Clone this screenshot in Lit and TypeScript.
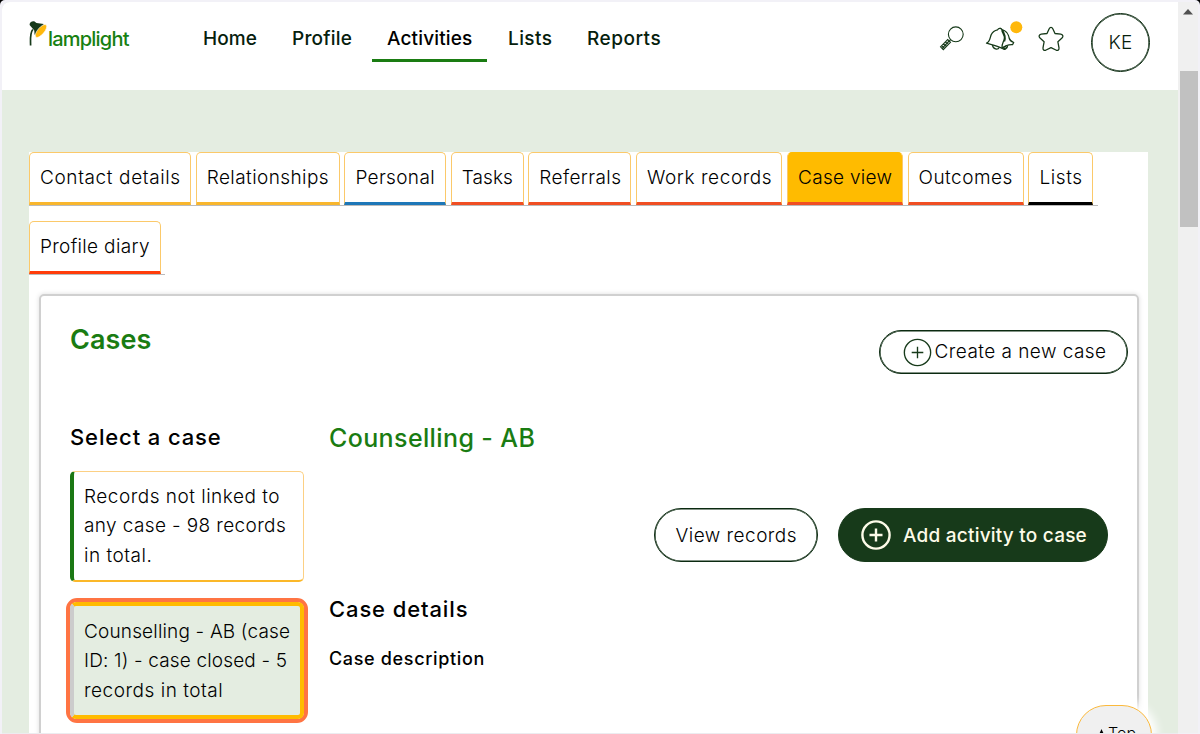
import { LitElement, html, css, svg } from "lit";
import { customElement } from "lit/decorators.js";
import { classMap } from "lit/directives/class-map.js";

interface Tab {
  label: string;
  width: number;
  tone: string;
  spacing: number;
  active?: boolean;
}

const NAV = [
  { label: "Home", width: 89, spacing: 0.1 },
  { label: "Profile", width: 95, spacing: 0.2 },
  { label: "Activities", width: 115, spacing: 0.15, active: true },
  { label: "Lists", width: 79, spacing: 0.4 },
  { label: "Reports", width: 102, spacing: 0.5 },
];

const TABS: Tab[] = [
  { label: "Contact details", width: 162, tone: "amber", spacing: 0.62 },
  { label: "Relationships", width: 144, tone: "amber", spacing: 0.42 },
  { label: "Personal", width: 101.6, tone: "blue", spacing: 0.35 },
  { label: "Tasks", width: 73, tone: "red", spacing: 0.1 },
  { label: "Referrals", width: 103, tone: "red", spacing: 0.4 },
  { label: "Work records", width: 146.3, tone: "red", spacing: 0.58 },
  { label: "Case view", width: 115.8, tone: "red", spacing: 0.3, active: true },
  { label: "Outcomes", width: 116.2, tone: "red", spacing: 0.5 },
  { label: "Lists", width: 65, tone: "black", spacing: 0.6 },
  { label: "Profile diary", width: 131.5, tone: "scarlet", spacing: 0.33 },
];

const plus = (size: number, stroke: number, arm: number) => svg`
  <svg width=${size} height=${size} viewBox="0 0 30 30" fill="none" stroke="currentColor" stroke-width=${stroke}>
    <circle cx="15" cy="15" r="13.6"></circle>
    <path d="M15 ${15 - arm}V${15 + arm}M${15 - arm} 15H${15 + arm}"></path>
  </svg>`;

@customElement("app-root")
export class AppRoot extends LitElement {
  static styles = css`
    :host { display: block; width: 1200px; height: 734px; overflow: hidden; background: #000; }
    * { box-sizing: border-box; }
    svg { display: block; flex: none; }
    .window {
      height: 734px; padding: 2px 2px 1px; background: #f2f1f7; border-radius: 5px 5px 0 0;
      font: 300 19px/29.3px Inter, sans-serif; color: #000; white-space: nowrap;
      position: relative; overflow: hidden; display: flex;
    }
    .page { width: 1176px; height: 731px; background: #e4ede1; border-radius: 8px 0 0 0; overflow: hidden; position: relative; }
    .scroll { width: 20px; background: #f0f0f0; display: flex; flex-direction: column; align-items: center; padding-top: 7px; }
    .scroll .thumb { width: 18px; height: 156px; background: #c1c1c1; margin: 56px 0 0 1px; }

    .header { height: 88px; background: #fff; display: flex; padding-left: 26px; }
    .logo { display: flex; width: 160px; padding-top: 18px; }
    .word { font-weight: 500; font-size: 20px; line-height: 24px; letter-spacing: -0.8px; color: #178011; padding-top: 7px; margin-left: 1px; }
    .nav { display: flex; height: 60px; }
    .nav a { height: 60px; padding-left: 15px; line-height: 73px; font-weight: 500; color: #06200c; border-bottom: 3px solid transparent; }
    .nav a.active { border-color: #1a7c12; color: #000; margin-right: 6px; }
    .icons { display: flex; margin-left: auto; padding-right: 28px; color: #173a1a; }
    .icons .find { margin: 23px 20px 0 0; }
    .icons .bell { margin: 18px 15px 0 0; }
    .icons .star { margin: 24px 27px 0 0; }
    .avatar { width: 59px; height: 59px; margin-top: 11px; border: 1px solid #0b2a10; box-shadow: inset 0 0 0 .6px #0b2a10; border-radius: 50%; line-height: 58px; text-align: center; color: #06200c; letter-spacing: .3px; }

    .main { margin: 62px 30px 0 27px; height: 590px; background: #fff; }
    .tabs { display: flex; flex-wrap: wrap; row-gap: 15px; }
    .slot { border-bottom: 1px solid #bbb; padding-right: 4.7px; height: 54px; }
    .tab { height: 53px; padding-left: 10px; line-height: 50px; border: 1px solid #fbc96a; border-bottom: 3px solid; border-radius: 5px 5px 0 0; background: #fff; }
    .tab.active { background: #ffbb00; border-top-color: #ffbb00; }
    .tab.amber { border-bottom-color: #f8b62d; }
    .tab.blue { border-bottom-color: #1d77b8; }
    .tab.red { border-bottom-color: #f04e23; }
    .tab.scarlet { border-bottom-color: #ff3c0a; }
    .tab.black { border-bottom-color: #000; }

    .card { margin: 19px 9px 0 10px; height: 460px; border: 2px solid #d0d0d0; border-radius: 5px; box-shadow: 0 0 5px #ddd; padding: 34px 9px 0 29px; }
    .top { display: flex; justify-content: space-between; }
    h1, h2, h3, h4 { margin: 0; }
    h1 { font-weight: 600; font-size: 27px; line-height: 20px; color: #1a7c12; letter-spacing: .1px; }
    .pill { display: flex; align-items: center; border: 1px solid #0b2a10; box-shadow: inset 0 0 0 .6px #0b2a10; border-radius: 30px; color: #000; }
    .pill span { padding-top: 1px; }
    .create { width: 249px; height: 44px; padding-left: 23px; letter-spacing: .45px; }
    .create svg { margin-right: 2.5px; color: #173a1a; }
    .create span { padding: 0; }
    .cols { display: flex; }
    .left { width: 259px; }
    h3 { font-weight: 500; font-size: 22px; line-height: 30px; letter-spacing: .88px; }
    .left h3 { margin-top: 48px; }
    .item { width: 234px; height: 111px; margin-top: 19px; border: 1px solid #fcd084; border-left: 4px solid #1b7814; border-bottom: 2px solid #fbb829; border-radius: 5px; padding: 10px 0 0 10px; }
    .item div { height: 29.3px; }
    .item.on { width: 242px; height: 125px; margin: 16px 0 0 -4px; border: 4px solid #ff7443; border-radius: 11px; padding: 0; }
    .on .body { height: 117px; border: 4px solid #ffbb00; border-left-color: #ccc; border-radius: 6px; background: #e4ede1; padding: 11px 0 0 10px; }
    .right { width: 779px; }
    h2 { font-weight: 500; font-size: 25px; line-height: 30px; letter-spacing: .38px; color: #1a7c12; margin-top: 49px; }
    .actions { display: flex; gap: 20px; margin: 55px 0 32px; justify-content: flex-end; }
    .view { width: 164px; height: 54px; padding-left: 20.5px; letter-spacing: .47px; }
    .add { width: 270px; height: 54px; padding-left: 22px; background: #173a1a; border-color: #173a1a; box-shadow: none; color: #fdfbe9; font-weight: 500; letter-spacing: .22px; }
    .add svg { margin-right: 12px; }
    h4 { font-weight: 500; font-size: 18px; line-height: 28px; letter-spacing: .66px; margin-top: 20.5px; }
    .totop {
      position: absolute; left: 1074px; top: 703px; width: 76px; height: 60px; border: 1px solid #fbb93c;
      border-radius: 36px; background: #f0f0f0; box-shadow: 0 0 10px 5px #fff; display: flex; padding: 13px 0 0 20px; font-size: 16px; letter-spacing: .1px;
    }
    .totop svg { margin: 10px 2px 0 0; }
    .foot { position: absolute; left: 2px; right: 22px; bottom: 0; height: 1px; background: #ececf0; }
  `;

  private tab(t: Tab) {
    return html`<div class="slot"><div class=${classMap({ tab: true, active: !!t.active, [t.tone]: true })}
      style="width:${t.width}px;letter-spacing:${t.spacing}px">${t.label}</div></div>`;
  }

  render() {
    return html`
      <div class="window">
        <div class="page">
          <header class="header">
            <div class="logo">
              <svg width="19" height="27" viewBox="0 0 19 27">
                <path d="M4.800 9.500C1.800 13 2.500 18 2.600 25.500" fill="none" stroke="#173a1a" stroke-width="1.700"></path>
                <path d="M1.600 5C1.300 2.500 3.800.8 6.200 1.200L8.500 3 15.800 4 8.500 15.500 6.500 14.500 6.300 10.500Z" fill="#173a1a"></path>
                <ellipse cx="13" cy="11" rx="8" ry="3.300" transform="rotate(-50 13 11)" fill="#ffb80c" stroke="#fff" stroke-width=".6"></ellipse>
              </svg>
              <span class="word">lamplight</span>
            </div>
            <nav class="nav">
              ${NAV.map((n) => html`<a class=${classMap({ active: !!n.active })} style="width:${n.width}px;letter-spacing:${n.spacing}px">${n.label}</a>`)}
            </nav>
            <div class="icons">
              <svg class="find" width="26" height="27" viewBox="0 0 26 27" fill="none" stroke="currentColor" stroke-width="1.1">
                <circle cx="16.800" cy="9.300" r="7.400"></circle>
                <path d="M11.600 14.700L10 16.500M1.500 21.800L8.700 14.500 11.500 17.300 4.300 24.700ZM2.700 20.700L5.500 23.500M4.500 18.800L7.500 21.500M6.500 17L9.500 19.600M3.500 23L10.100 16"></path>
              </svg>
              <svg class="bell" width="38" height="34" viewBox="0 0 38 34" fill="none" stroke="currentColor" stroke-width="1.300" stroke-linejoin="round">
                <path d="M1.500 23.200C5 22 4.800 18 6.300 14.500 7.700 11.500 9.800 10.300 12.600 9.800 13.600 7.800 16 7.800 17 9.600 22.500 11 23.500 15 24.300 18.500 24.800 20.500 26.500 21.500 28.700 22.500L27.500 24.700C22 24.500 19 26.500 17 28.300 12 25.600 7 24.800 1.500 23.200Z"></path>
                <path d="M17 9.600C16.300 12.500 20.300 15 19.300 19 18.700 22 16.300 24 17 28.300M17.500 10C19.500 14 21.200 17 19.500 21.500M7.500 25C8 29.600 13 30 14.200 27.400M17.300 27.800C18.500 30.500 22.500 29.300 22.700 25.200M18.300 26.800L20.200 29M20 25.900L21.800 28.200"></path>
                <circle cx="31.300" cy="7.300" r="6" fill="#ffb80c" stroke="none"></circle>
              </svg>
              <svg class="star" width="26" height="27" viewBox="0 0 26 27" fill="none" stroke="currentColor" stroke-width="1.300" stroke-linejoin="round">
                <path d="M11.200 2.700C12 1 14 1 14.800 2.700L17 7.500 22.800 8.200C25 8.600 25.600 10.600 24 12L19.900 15.800 21 21.800C21.300 24 19.600 25 17.900 24L13 21.600 8.100 24C6.400 25 4.700 24 5 21.800L6.100 15.800 2 12C.4 10.600 1 8.600 3.200 8.200L9 7.500Z"></path>
              </svg>
              <div class="avatar">KE</div>
            </div>
          </header>

          <main class="main">
            <div class="tabs">${TABS.map((t) => this.tab(t))}</div>
            <section class="card">
              <div class="top">
                <h1>Cases</h1>
                <div class="pill create">${plus(29, 1.4, 6)}<span>Create a new case</span></div>
              </div>
              <div class="cols">
                <div class="left">
                  <h3>Select a case</h3>
                  <div class="item">
                    <div style="letter-spacing:.5px">Records not linked to</div>
                    <div style="letter-spacing:.38px">any case - 98 records</div>
                    <div style="letter-spacing:.5px">in total.</div>
                  </div>
                  <div class="item on">
                    <div class="body">
                      <div style="letter-spacing:.17px">Counselling - AB (case</div>
                      <div style="letter-spacing:.16px">ID: 1) - case closed - 5</div>
                      <div style="letter-spacing:.52px">records in total</div>
                    </div>
                  </div>
                </div>
                <div class="right">
                  <h2>Counselling - AB</h2>
                  <div class="actions">
                    <div class="pill view"><span>View records</span></div>
                    <div class="pill add">${plus(30, 2.4, 6.5)}<span>Add activity to case</span></div>
                  </div>
                  <h3>Case details</h3>
                  <h4>Case description</h4>
                </div>
              </div>
            </section>
          </main>
          <div class="totop"><svg width="9" height="10" viewBox="0 0 9 10"><path d="M4.500 0L9 10H0Z"></path></svg>Top</div>
        </div>
        <div class="scroll">
          <svg width="10" height="6" viewBox="0 0 10 6"><path d="M5 0L10 5.500H0Z" fill="#505050"></path></svg>
          <div class="thumb"></div>
        </div>
        <div class="foot"></div>
      </div>
    `;
  }
}
